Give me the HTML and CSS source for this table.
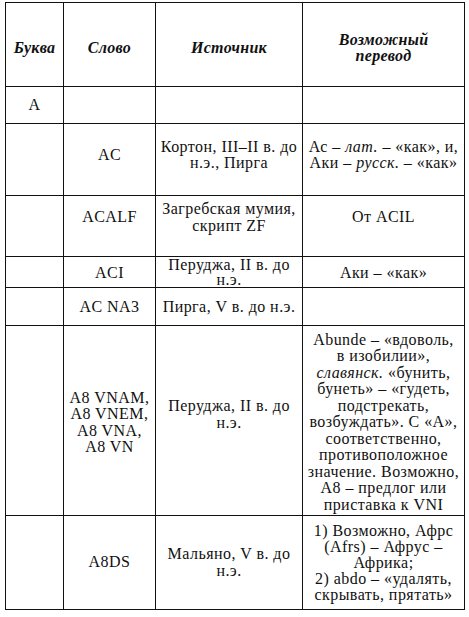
FILE: index.html
```html
<!DOCTYPE html>
<html>
<head>
<meta charset="utf-8">
<link rel="stylesheet" href="styles.css">
</head>
<body>
<table class="dict">
  <colgroup>
    <col class="c-letter">
    <col class="c-word">
    <col class="c-source">
    <col class="c-trans">
  </colgroup>
  <thead>
    <tr class="r-head">
      <th class="cell">Буква</th>
      <th class="cell">Слово</th>
      <th class="cell">Источник</th>
      <th class="cell">Возможный<br>перевод</th>
    </tr>
  </thead>
  <tbody>
    <tr class="r-a">
      <td class="cell">А</td><td class="cell"></td><td class="cell"></td><td class="cell"></td>
    </tr>
    <tr class="r-ac">
      <td class="cell"></td>
      <td class="cell">AC</td>
      <td class="cell">Кортон, III–II в. до<br>н.э., Пирга</td>
      <td class="cell">Ас – <i>лат.</i> – «как», и,<br>Аки – <i>русск.</i> – «как»</td>
    </tr>
    <tr class="r-acalf">
      <td class="cell"></td>
      <td class="cell">ACALF</td>
      <td class="cell">Загребская мумия,<br>скрипт ZF</td>
      <td class="cell">От ACIL</td>
    </tr>
    <tr class="r-aci">
      <td class="cell"></td>
      <td class="cell">ACI</td>
      <td class="cell">Перуджа, II в. до<br>н.э.</td>
      <td class="cell">Аки – «как»</td>
    </tr>
    <tr class="r-acna">
      <td class="cell"></td>
      <td class="cell">AC NA3</td>
      <td class="cell">Пирга, V в. до н.э.</td>
      <td class="cell"></td>
    </tr>
    <tr class="r-a8">
      <td class="cell"></td>
      <td class="cell">A8 VNAM,<br>A8 VNEM,<br>A8 VNA,<br>A8 VN</td>
      <td class="cell shift">Перуджа, II в. до<br>н.э.</td>
      <td class="cell">Abunde – «вдоволь,<br>в изобилии»,<br><i>славянск.</i> «бунить,<br>бунеть» – «гудеть,<br>подстрекать,<br>возбуждать». С «А»,<br>соответственно,<br>противоположное<br>значение. Возможно,<br>А8 – предлог или<br>приставка к VNI</td>
    </tr>
    <tr class="r-a8ds">
      <td class="cell"></td>
      <td class="cell">A8DS</td>
      <td class="cell">Мальяно, V в. до<br>н.э.</td>
      <td class="cell tight">1) Возможно, Афрс<br>(Afrs) – Афрус –<br>Африка;<br>2) abdo – «удалять,<br>скрывать, прятать»</td>
    </tr>
  </tbody>
</table>
</body>
</html>
```

FILE: styles.css
```css
body {
  margin: 2px 0 0 5px;
  background: #ffffff;
  color: #111111;
}

.dict {
  border-collapse: collapse;
  table-layout: fixed;
  width: 459px;
}

.c-letter { width: 58px; }
.c-word { width: 92px; }
.c-source { width: 147px; }
.c-trans { width: 162px; }

.cell {
  font-family: "Liberation Serif", "Times New Roman", serif;
  font-size: 16px;
  letter-spacing: 0.45px;
  line-height: 16.5px;
  border: 1px solid #111111;
  padding: 0 1px;
  text-align: center;
  vertical-align: middle;
  white-space: nowrap;
}

th.cell {
  font-weight: bold;
  font-style: italic;
  letter-spacing: 0.3px;
  padding-top: 7px;
}

.r-head { height: 84px; }
.r-a { height: 37px; }
.r-ac { height: 72px; }
.r-ac .cell { padding-bottom: 9px; }
.r-acalf { height: 61px; }
.r-acalf .cell { padding-bottom: 17px; }
.r-aci { height: 31px; }
.r-aci .cell { line-height: 15px; }
.r-acna { height: 38px; }
.r-acna .cell { padding-top: 1px; }
.r-a8 { height: 190px; }
.r-a8 .cell { padding-top: 4px; }
.r-a8 .cell.shift { padding-bottom: 12px; padding-top: 0; }
.r-a8ds { height: 94px; }
.r-a8ds .cell.tight { line-height: 16px; }
```
